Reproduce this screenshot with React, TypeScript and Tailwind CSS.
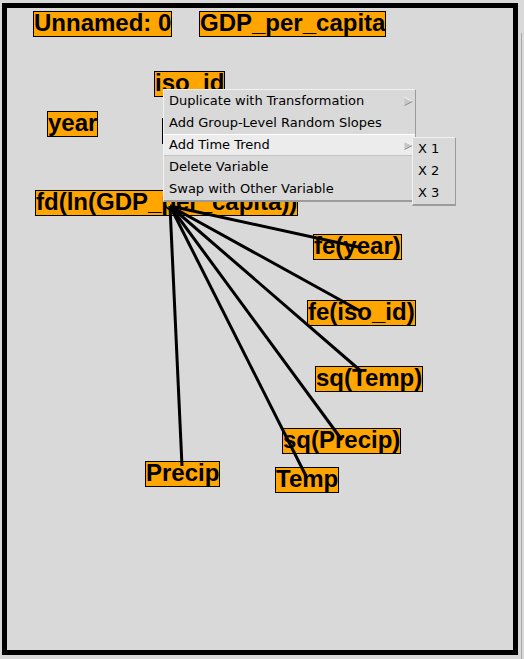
import React from "react";

type Node = { label: string; x: number; y: number; w?: number };

// page coordinates; the canvas interior starts at (7, 8)
const OX = 7;
const OY = 8;

const nodes: Node[] = [
  { label: "Unnamed: 0", x: 33, y: 11 },
  { label: "GDP_per_capita", x: 199, y: 11 },
  { label: "iso_id", x: 154, y: 71 },
  { label: "year", x: 47, y: 111 },
  { label: "", x: 162, y: 118, w: 90 },
  { label: "fd(ln(GDP_per_capita))", x: 35, y: 190 },
  { label: "fe(year)", x: 313, y: 234 },
  { label: "fe(iso_id)", x: 307, y: 300 },
  { label: "sq(Temp)", x: 315, y: 366 },
  { label: "sq(Precip)", x: 282, y: 428 },
  { label: "Precip", x: 145, y: 461 },
  { label: "Temp", x: 275, y: 467 },
];

const source = { x: 170, y: 206 };
const targets = [
  { x: 358, y: 247 },
  { x: 362, y: 312 },
  { x: 362, y: 372 },
  { x: 342, y: 440 },
  { x: 306, y: 476 },
  { x: 182, y: 466 },
];

const menuItems = [
  { label: "Duplicate with Transformation", sub: true },
  { label: "Add Group-Level Random Slopes" },
  { label: "Add Time Trend", sub: true, active: true },
  { label: "Delete Variable" },
  { label: "Swap with Other Variable" },
];

function Arrow() {
  return (
    <svg width="9" height="9" viewBox="0 0 9 9" className="shrink-0">
      <polygon points="0.5,0.5 8.5,4.5 0.5,8.5" fill="#c6c6c6" />
      <line x1="0.5" y1="0.5" x2="8.5" y2="4.5" stroke="#f4f4f4" strokeWidth="1" />
      <line x1="0.5" y1="8.5" x2="8.5" y2="4.5" stroke="#8e8e8e" strokeWidth="1" />
    </svg>
  );
}

function VarNode({ node }: { node: Node }) {
  return (
    <div
      className="absolute h-[26px] border border-black bg-[#ffa500] text-black font-bold text-[24px] leading-[21px] whitespace-nowrap"
      style={{
        left: node.x - OX,
        top: node.y - OY,
        width: node.w,
        fontFamily: '"Liberation Sans", Arial, sans-serif',
      }}
    >
      {node.label}
    </div>
  );
}

export default function App() {
  const menuFont = { fontFamily: '"DejaVu Sans", sans-serif' };
  return (
    <div className="relative flex w-[524px] h-[659px] bg-[#d9d9d9] overflow-hidden">
      {/* Canvas */}
      <div className="w-[521px] pl-[2px] pt-[3px]">
        <div className="relative w-[516px] h-[652px] border-[5px] border-black bg-[#d9d9d9]">
          {nodes.map((n, i) => (
            <VarNode key={i} node={n} />
          ))}
          <svg className="absolute inset-0 pointer-events-none" width="506" height="642">
            {targets.map((t, i) => (
              <line
                key={i}
                x1={source.x - OX}
                y1={source.y - OY}
                x2={t.x - OX}
                y2={t.y - OY}
                stroke="#000"
                strokeWidth="3"
              />
            ))}
          </svg>
        </div>
      </div>
      <div className="w-[3px] mt-[33px] border-l border-[#a9a9a9]" />

      {/* Context menu */}
      <div
        className="absolute left-[163px] top-[89px] w-[253px] bg-[#d9d9d9] border border-t-[#f2f2f2] border-l-[#f2f2f2] border-r-[#9c9c9c] border-b-[#9c9c9c] border-b-2 text-[13px] text-black"
        style={menuFont}
      >
        {menuItems.map((m) => (
          <div
            key={m.label}
            className={
              m.active
                ? "flex items-center h-[22px] pl-[5px] pr-[2px] bg-[#ececec] border-t border-t-white border-b border-b-[#c4c4c4]"
                : "flex items-center h-[22px] pl-[5px] pr-[2px]"
            }
          >
            <span className="flex-1 whitespace-nowrap">{m.label}</span>
            {m.sub && <Arrow />}
          </div>
        ))}
      </div>

      {/* Submenu */}
      <div
        className="absolute left-[412px] top-[137px] w-[44px] bg-[#d9d9d9] border border-t-[#f2f2f2] border-l-[#f2f2f2] border-r-[#9c9c9c] border-b-[#9c9c9c] border-b-2 text-[13px] text-black"
        style={menuFont}
      >
        {["X 1", "X 2", "X 3"].map((s) => (
          <div key={s} className="flex items-center h-[22px] pl-[5px] whitespace-nowrap">
            {s}
          </div>
        ))}
      </div>
    </div>
  );
}
